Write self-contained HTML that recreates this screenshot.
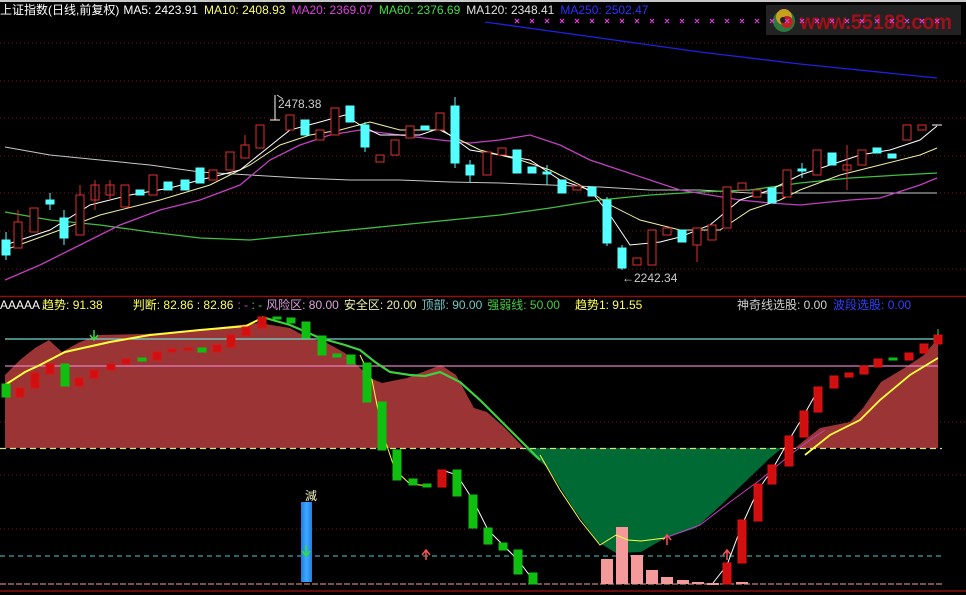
<!DOCTYPE html>
<html><head><meta charset="utf-8"><style>
html,body{margin:0;padding:0;background:#000;width:966px;height:595px;overflow:hidden}
svg{display:block}
text{font-family:"Liberation Sans","Noto Sans CJK SC",sans-serif;font-size:12px}
</style></head><body>
<svg width="966" height="595" viewBox="0 0 966 595" xmlns="http://www.w3.org/2000/svg">
<rect x="0" y="0" width="966" height="595" fill="#000"/>
<rect x="0" y="0" width="966" height="2" fill="#c8c8c8"/>
<g stroke="#7a1a1a" stroke-width="1" stroke-dasharray="1,3">
<line x1="0" y1="43" x2="966" y2="43"/><line x1="0" y1="81" x2="966" y2="81"/><line x1="0" y1="118" x2="966" y2="118"/><line x1="0" y1="156" x2="966" y2="156"/><line x1="0" y1="193" x2="966" y2="193"/><line x1="0" y1="231" x2="966" y2="231"/><line x1="0" y1="269" x2="966" y2="269"/>
<line x1="0" y1="422" x2="966" y2="422"/><line x1="0" y1="475" x2="966" y2="475"/><line x1="0" y1="529" x2="966" y2="529"/>
</g>
<line x1="0" y1="296.5" x2="966" y2="296.5" stroke="#8a1010" stroke-width="1.5"/>
<line x1="0" y1="591" x2="966" y2="591" stroke="#8a1010" stroke-width="1.5"/>
<!-- logo -->
<rect x="766" y="5" width="195" height="30" fill="#222"/>
<circle cx="784" cy="21" r="11" fill="#2a7a40"/><circle cx="784" cy="17" r="8" fill="#c8a020"/><circle cx="787" cy="22" r="6" fill="#c02020"/><circle cx="783" cy="20" r="3" fill="#222"/>
<text x="800" y="29" fill="#a0101a" textLength="152" lengthAdjust="spacingAndGlyphs" style="font-size:21px;font-weight:bold">www.55188.com</text>
<!-- magenta x marks -->
<path stroke="#e040e0" stroke-width="1.2" d="M515,19l4,4m0,-4l-4,4 M530,19l4,4m0,-4l-4,4 M545,19l4,4m0,-4l-4,4 M560,19l4,4m0,-4l-4,4 M575,19l4,4m0,-4l-4,4 M590,19l4,4m0,-4l-4,4 M605,19l4,4m0,-4l-4,4 M620,19l4,4m0,-4l-4,4 M635,19l4,4m0,-4l-4,4 M650,19l4,4m0,-4l-4,4 M665,19l4,4m0,-4l-4,4 M680,19l4,4m0,-4l-4,4 M695,19l4,4m0,-4l-4,4 M710,19l4,4m0,-4l-4,4 M725,19l4,4m0,-4l-4,4 M740,19l4,4m0,-4l-4,4 M755,19l4,4m0,-4l-4,4 M770,19l4,4m0,-4l-4,4 M785,19l4,4m0,-4l-4,4 M800,19l4,4m0,-4l-4,4 M815,19l4,4m0,-4l-4,4 M830,19l4,4m0,-4l-4,4 M845,19l4,4m0,-4l-4,4 M860,19l4,4m0,-4l-4,4 M875,19l4,4m0,-4l-4,4 M890,19l4,4m0,-4l-4,4 M905,19l4,4m0,-4l-4,4 M920,19l4,4m0,-4l-4,4 M935,19l4,4m0,-4l-4,4"/>
<!-- MA lines -->
<polyline fill="none" stroke="#2020e0" stroke-width="1.3" points="485,22 600,38 700,52 800,64 937,78"/>
<polyline fill="none" stroke="#c8c8c8" stroke-width="1" points="5,147 50,155 100,160 150,165 200,172 250,175 300,178 350,180 400,180 450,182 500,183 550,185 600,187 650,190 700,190 750,193 800,193 850,193 900,193 937,193"/>
<polyline fill="none" stroke="#40c040" stroke-width="1.3" points="5,212 50,220 100,225 150,232 200,238 250,240 300,235 350,230 400,225 450,220 500,215 550,208 600,200 650,195 700,192 750,190 800,183 850,178 900,175 937,173"/>
<polyline fill="none" stroke="#c040c0" stroke-width="1.3" points="5,280 40,265 80,245 120,225 160,210 200,200 240,185 270,160 300,145 330,135 360,130 400,135 440,140 470,143 500,140 530,135 560,145 590,160 620,170 650,180 680,190 710,195 740,200 770,203 800,205 850,200 880,198 920,185 937,178"/>
<polyline fill="none" stroke="#f0f0a0" stroke-width="1" points="5,250 60,230 100,215 160,200 210,185 250,165 280,145 310,135 340,130 370,122 400,130 440,130 480,150 520,160 550,170 580,185 610,205 640,220 680,230 720,230 750,210 780,200 800,190 840,175 880,165 920,155 937,148"/>
<polyline fill="none" stroke="#fff" stroke-width="1" points="5,245 50,230 90,205 130,195 170,188 200,180 240,170 265,150 290,130 320,122 345,115 360,125 380,135 420,135 440,128 470,150 500,155 530,160 560,180 590,190 610,215 630,245 660,242 680,237 710,225 740,200 770,190 800,175 830,165 860,155 890,150 920,140 937,126"/>
<g stroke-width="1">
<g fill="#54ffff" stroke="#54ffff">
<rect x="2" y="240" width="8" height="15"/><line x1="6" y1="232" x2="6" y2="260"/>
<rect x="46" y="200" width="8" height="4"/><line x1="50" y1="193" x2="50" y2="210"/>
<rect x="60" y="218" width="8" height="20"/><line x1="64" y1="210" x2="64" y2="245"/>
<rect x="136" y="190" width="8" height="5"/>
<rect x="164" y="182" width="8" height="8"/>
<rect x="181" y="180" width="8" height="10"/>
<rect x="196" y="168" width="8" height="15"/>
<rect x="301" y="120" width="8" height="15"/>
<rect x="346" y="106" width="8" height="16"/>
<rect x="361" y="125" width="8" height="22"/><line x1="365" y1="122" x2="365" y2="152"/>
<rect x="421" y="126" width="8" height="4"/>
<rect x="451" y="106" width="8" height="57"/><line x1="455" y1="97" x2="455" y2="168"/>
<rect x="466" y="165" width="8" height="10"/><line x1="470" y1="160" x2="470" y2="182"/>
<rect x="513" y="150" width="8" height="23"/>
<rect x="528" y="167" width="8" height="6"/>
<rect x="543" y="172" width="8" height="2"/><line x1="547" y1="165" x2="547" y2="185"/>
<rect x="558" y="180" width="8" height="13"/>
<rect x="588" y="187" width="8" height="9"/>
<rect x="603" y="200" width="8" height="43"/><line x1="607" y1="197" x2="607" y2="246"/>
<rect x="618" y="248" width="8" height="20"/><line x1="622" y1="245" x2="622" y2="270"/>
<rect x="678" y="230" width="8" height="12"/>
<rect x="768" y="188" width="8" height="15"/>
<rect x="798" y="169" width="8" height="2"/><line x1="802" y1="163" x2="802" y2="178"/>
<rect x="828" y="153" width="8" height="12"/>
<rect x="873" y="148" width="8" height="5"/>
<rect x="888" y="154" width="8" height="4"/>
</g>
<g fill="#000" stroke="#e03030">
<rect x="14" y="222" width="8" height="26"/><line x1="18" y1="210" x2="18" y2="222"/>
<rect x="30" y="208" width="8" height="24"/>
<rect x="76" y="195" width="8" height="40"/><line x1="80" y1="185" x2="80" y2="195"/>
<rect x="91" y="185" width="8" height="15"/><line x1="95" y1="180" x2="95" y2="210"/>
<rect x="106" y="185" width="8" height="10"/><line x1="110" y1="180" x2="110" y2="200"/>
<rect x="121" y="185" width="8" height="22"/>
<rect x="149" y="175" width="8" height="20"/>
<rect x="209" y="170" width="8" height="10"/>
<rect x="226" y="152" width="8" height="18"/>
<rect x="241" y="145" width="8" height="13"/><line x1="245" y1="135" x2="245" y2="145"/>
<rect x="256" y="125" width="8" height="23"/>
<rect x="286" y="115" width="8" height="15"/>
<rect x="316" y="130" width="8" height="10"/>
<rect x="331" y="108" width="8" height="27"/>
<rect x="376" y="155" width="8" height="7"/>
<rect x="391" y="140" width="8" height="15"/>
<rect x="406" y="126" width="8" height="12"/>
<rect x="436" y="113" width="8" height="17"/>
<rect x="483" y="152" width="8" height="23"/>
<rect x="498" y="148" width="8" height="7"/>
<rect x="573" y="186" width="8" height="4"/>
<rect x="633" y="258" width="8" height="7"/>
<rect x="648" y="230" width="8" height="35"/>
<rect x="663" y="228" width="8" height="7"/>
<rect x="693" y="228" width="8" height="17"/><line x1="697" y1="245" x2="697" y2="262"/>
<rect x="708" y="225" width="8" height="15"/>
<rect x="723" y="187" width="8" height="41"/>
<rect x="738" y="183" width="8" height="7"/>
<rect x="753" y="190" width="8" height="7"/>
<rect x="783" y="170" width="8" height="27"/>
<rect x="813" y="150" width="8" height="25"/>
<rect x="843" y="165" width="8" height="5"/><line x1="847" y1="145" x2="847" y2="190"/>
<rect x="858" y="150" width="8" height="15"/>
<rect x="903" y="125" width="8" height="15"/>
<rect x="918" y="125" width="8" height="5"/>
</g>
<line x1="270" y1="120" x2="280" y2="120" stroke="#fff"/><line x1="275" y1="95" x2="275" y2="120" stroke="#fff"/>
<line x1="932" y1="125" x2="942" y2="125" stroke="#fff"/>
</g>
<text x="278" y="108" fill="#ccc">2478.38</text>
<path d="M277,95 l6,4" stroke="#ccc" fill="none"/>
<text x="622" y="282" fill="#ccc">←2242.34</text>
<text x="0" y="14"><tspan fill="#fff">上证指数(日线,前复权)</tspan><tspan fill="#fff" dx="4">MA5: 2423.91</tspan><tspan fill="#ffff60" dx="6">MA10: 2408.93</tspan><tspan fill="#e040e0" dx="6">MA20: 2369.07</tspan><tspan fill="#40e040" dx="6">MA60: 2376.69</tspan><tspan fill="#e0e0e0" dx="6">MA120: 2348.41</tspan><tspan fill="#3030ff" dx="6">MA250: 2502.47</tspan></text>

<polygon fill="#9b3535" points="5,375 20,360 35,348 49,340 62,352 80,342 99,335 142,334 185,332 222,327 259,323 290,328 308,338 327,343 345,353 370,378 382,383 407,378 441,365 456,375 474,408 487,412 505,428 524,448 5,448"/>
<polygon fill="#9b3535" points="795,448 820,428 850,422 863,408 881,382 906,367 924,355 938,338 938,448"/>
<polygon fill="#006a35" points="524,448 548,468 573,508 598,542 616,553 641,552 665,538 696,528 721,505 745,482 770,458 782,448"/>
<line x1="5" y1="339" x2="938" y2="339" stroke="#70d8d0" stroke-width="1.3"/>
<line x1="5" y1="366" x2="938" y2="366" stroke="#e080c0" stroke-width="1.3"/>
<line x1="0" y1="448.5" x2="942" y2="448.5" stroke="#e0e080" stroke-width="1.3" stroke-dasharray="6,4"/>
<line x1="0" y1="556" x2="942" y2="556" stroke="#50c8c8" stroke-width="1" stroke-dasharray="5,4"/>
<line x1="0" y1="584" x2="942" y2="584" stroke="#f0a0a0" stroke-width="1" stroke-dasharray="6,2"/>
<g fill="#f59a9a">
<rect x="601" y="559" width="12" height="25"/><rect x="616" y="527" width="12" height="57"/><rect x="631" y="555" width="12" height="29"/><rect x="646" y="570" width="12" height="14"/><rect x="661" y="577" width="12" height="7"/><rect x="677" y="580" width="12" height="4"/><rect x="692" y="582" width="12" height="2"/><rect x="707" y="583" width="12" height="2"/><rect x="736" y="582" width="12" height="2"/>
</g>
<defs><linearGradient id="bg" x1="0" x2="1"><stop offset="0" stop-color="#1a80e8"/><stop offset="0.5" stop-color="#40a8ff"/><stop offset="1" stop-color="#1a80e8"/></linearGradient></defs>
<rect x="301" y="502" width="11" height="80" fill="url(#bg)"/>
<text x="305" y="500" fill="#f0f0c0">減</text>
<path d="M306,545 v10 M302,551 l4,5 4,-5" stroke="#30e030" stroke-width="1.5" fill="none"/>
<path d="M94,330 v9 M90,335 l4,5 4,-5" stroke="#30e030" stroke-width="1.5" fill="none"/>
<g stroke="#ff5050" stroke-width="1.5" fill="none">
<path d="M426,560 v-9 M422,555 l4,-5 4,5"/><path d="M667,545 v-9 M663,540 l4,-5 4,5"/><path d="M727,560 v-9 M723,555 l4,-5 4,5"/>
</g>
<polyline fill="none" stroke="#ffff40" stroke-width="2" points="5,385 25,372 40,365 65,352 110,342 150,335 200,330 246,326 262,318"/>
<polyline fill="none" stroke="#40d040" stroke-width="2.2" points="262,317 290,325 320,338 345,345 360,350 375,362 390,372 410,375 425,376 440,372 460,382 480,400 500,420 520,440 540,460"/>
<polyline fill="none" stroke="#ffff40" stroke-width="1" points="360,355 372,380 378,410 385,440 395,470 410,484 430,486"/>
<polyline fill="none" stroke="#ffff40" stroke-width="1" points="540,455 560,490 580,520 600,545 616,535 628,540 641,541 665,538"/>
<polyline fill="none" stroke="#c040c0" stroke-width="1" points="665,538 700,525 730,502 760,480 790,455 810,440 825,430"/>
<polyline fill="none" stroke="#ffff40" stroke-width="1.8" points="805,455 830,435 860,420 880,400 910,375 938,358"/>
<polyline fill="none" stroke="#fff" stroke-width="1" points="442,470 457,475 473,500 488,530 503,545 518,560 533,580"/>
<polyline fill="none" stroke="#fff" stroke-width="1" points="713,583 727,565 742,525 758,490 772,470 789,440 804,415 818,390"/>
<g fill="#10c010" stroke="#10c010">
<rect x="2" y="384" width="8" height="13"/><rect x="61" y="364" width="8" height="22"/><rect x="138" y="358" width="8" height="3"/><rect x="198" y="348" width="8" height="4"/>
<rect x="273" y="317" width="8" height="2"/><rect x="287" y="318" width="8" height="5"/><rect x="302" y="322" width="8" height="16"/><rect x="318" y="336" width="8" height="19"/><rect x="333" y="354" width="8" height="3"/><rect x="347" y="355" width="8" height="9"/>
<rect x="363" y="363" width="8" height="39"/><rect x="378" y="402" width="8" height="48"/><rect x="393" y="450" width="8" height="30"/><rect x="409" y="479" width="8" height="6"/><rect x="423" y="484" width="8" height="3"/>
<rect x="453" y="470" width="8" height="26"/><rect x="469" y="495" width="8" height="33"/><rect x="484" y="528" width="8" height="16"/><rect x="499" y="543" width="8" height="7"/><rect x="514" y="550" width="8" height="24"/><rect x="529" y="573" width="8" height="11"/>
<rect x="889" y="358" width="8" height="2"/>
</g>
<g fill="#d01010" stroke="#e01010">
<rect x="16" y="388" width="8" height="9"/><rect x="31" y="373" width="8" height="15"/><rect x="46" y="364" width="8" height="10"/><rect x="75" y="378" width="8" height="8"/><rect x="90" y="370" width="8" height="8"/><rect x="107" y="364" width="8" height="6"/><rect x="122" y="359" width="8" height="5"/>
<rect x="153" y="352" width="8" height="8"/><rect x="168" y="349" width="8" height="3"/><rect x="184" y="348" width="8" height="2"/><rect x="213" y="345" width="8" height="7"/><rect x="227" y="335" width="8" height="12"/><rect x="242" y="327" width="8" height="9"/><rect x="258" y="317" width="8" height="11"/>
<rect x="438" y="470" width="8" height="17"/>
<rect x="723" y="563" width="8" height="21"/><rect x="738" y="520" width="8" height="43"/><rect x="754" y="484" width="8" height="37"/><rect x="768" y="465" width="8" height="19"/><rect x="785" y="436" width="8" height="30"/><rect x="800" y="411" width="8" height="26"/><rect x="814" y="387" width="8" height="25"/><rect x="830" y="376" width="8" height="12"/><rect x="845" y="373" width="8" height="4"/><rect x="860" y="366" width="8" height="8"/><rect x="874" y="359" width="8" height="8"/><rect x="905" y="353" width="8" height="7"/><rect x="920" y="344" width="8" height="9"/><rect x="934" y="335" width="8" height="9"/>
</g>
<line x1="938" y1="329" x2="938" y2="335" stroke="#30e030"/>
<text x="0" y="309"><tspan fill="#fff">AAAAA</tspan><tspan fill="#ffff60" dx="2">趋势: 91.38</tspan><tspan fill="#ffff60" dx="30">判断: 82.86 : 82.86</tspan><tspan fill="#e040e0" dx="4">: - </tspan><tspan fill="#40e040">: -</tspan><tspan fill="#e0a0e0" dx="4">风险区: 80.00</tspan><tspan fill="#f0f0a0" dx="5">安全区: 20.00</tspan><tspan fill="#70c8c8" dx="5">顶部: 90.00</tspan><tspan fill="#40d040" dx="5">强弱线: 50.00</tspan><tspan fill="#ffff60" dx="15">趋势1: 91.55</tspan></text>
<text x="737" y="309"><tspan fill="#d0d0d0">神奇线选股: 0.00</tspan><tspan fill="#3040ff" dx="6">波段选股: 0.00</tspan></text>
</svg>
</body></html>
